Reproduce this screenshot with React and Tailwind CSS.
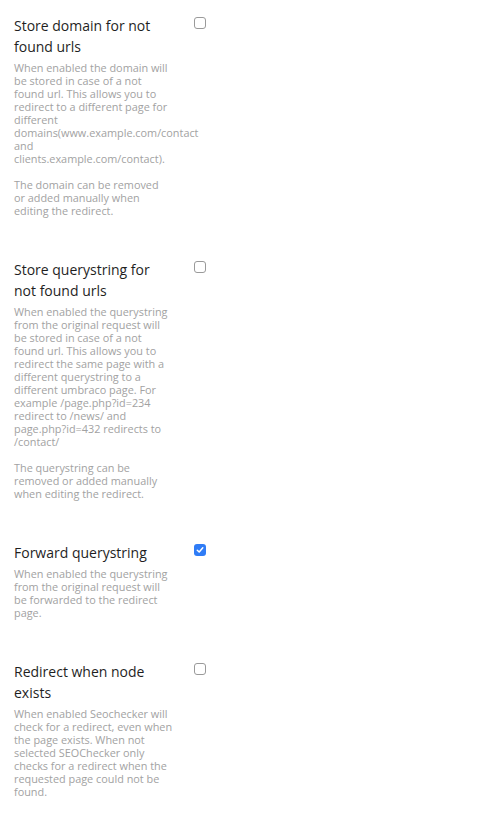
import React, { useState } from 'react';

const settings = [
  {
    id: 'storeDomain',
    title: 'Store domain for not found urls',
    description: [
      'When enabled the domain will be stored in case of a not found url. This allows you to redirect to a different page for different domains(www.example.com/contact and clients.example.com/contact).',
      'The domain can be removed or\u00a0added manually when editing the redirect.',
    ],
    checked: false,
  },
  {
    id: 'storeQuerystring',
    title: 'Store querystring for not found urls',
    description: [
      'When enabled the querystring from the original request will be stored in case of a not found url. This allows you to redirect the same page with a different querystring to a different umbraco page. For example /page.php?id=234 redirect to /news/ and page.php?id=432 redirects to /contact/',
      'The querystring can be removed or added manually when editing the redirect.',
    ],
    checked: false,
  },
  {
    id: 'forwardQuerystring',
    title: 'Forward querystring',
    description: [
      'When enabled the querystring from the original request will be forwarded to the redirect page.',
    ],
    checked: true,
  },
  {
    id: 'redirectWhenExists',
    title: 'Redirect when node exists',
    description: [
      'When enabled Seochecker will check for a redirect, even when the page exists. When not selected SEOChecker only checks for a redirect when the requested page could not be found.',
    ],
    checked: false,
  },
];

const Checkbox = ({ checked, onChange }) => (
  <button
    type="button"
    onClick={onChange}
    className={`mt-[2px] w-[12px] h-[12px] rounded-[3px] flex items-center justify-center flex-shrink-0 ${
      checked ? 'bg-[#2f7cf6]' : 'bg-white border border-[#9a9a9a]'
    }`}
  >
    {checked && (
      <svg width="8" height="8" viewBox="0 0 8 8" fill="none">
        <path d="M1.3 4.2 L3.2 6 L6.8 1.8" stroke="white" strokeWidth="1.5" strokeLinecap="round" strokeLinejoin="round" />
      </svg>
    )}
  </button>
);

export default function App() {
  const [values, setValues] = useState(
    Object.fromEntries(settings.map(s => [s.id, s.checked]))
  );

  return (
    <div className="min-h-screen bg-white pl-[14px] pt-[15px] font-['Open_Sans',sans-serif]">
      <div className="flex flex-col gap-[42px]">
        {settings.map(s => (
          <div key={s.id} className="flex items-start">
            <div className="w-[160px] flex-shrink-0">
              <div className="text-[14px] leading-[21px] text-[#1f1f1f]">{s.title}</div>
              <div className="mt-[4px] text-[10.86px] leading-[13px] text-[#a2a2a2]">
                {s.description.map((p, i) => (
                  <p key={i} className={i > 0 ? 'mt-[13px]' : ''}>{p}</p>
                ))}
              </div>
            </div>
            <div className="ml-[20px]">
              <Checkbox
                checked={values[s.id]}
                onChange={() => setValues(v => ({ ...v, [s.id]: !v[s.id] }))}
              />
            </div>
          </div>
        ))}
      </div>
    </div>
  );
}
